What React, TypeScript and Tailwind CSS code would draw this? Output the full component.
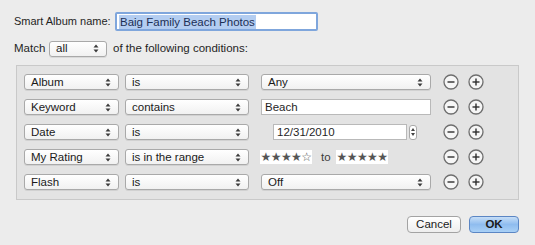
import { ReactNode } from 'react';

const font = { fontFamily: '"Liberation Sans", Arial, sans-serif' };

function Arrows() {
  return (
    <svg width="6" height="9" viewBox="0 0 6 9" className="shrink-0">
      <path d="M3 0.5 L5.5 3.5 H0.5 Z" fill="#3a3a3a" />
      <path d="M3 8.5 L5.5 5.5 H0.5 Z" fill="#3a3a3a" />
    </svg>
  );
}

function Popup({ label, w, className = '' }: { label: string; w: string; className?: string }) {
  return (
    <div
      className={`${w} ${className} h-[16px] flex items-center justify-between pl-[6px] pr-[7px] rounded-[3px] border border-[#a9a9a9] bg-gradient-to-b from-white to-[#f1f1f1] shadow-[0_1px_0_rgba(0,0,0,0.08)] text-[#1a1a1a]`}
    >
      <span className="whitespace-nowrap">{label}</span>
      <Arrows />
    </div>
  );
}

function CircleBtn({ plus }: { plus?: boolean }) {
  return (
    <svg width="16" height="16" viewBox="0 0 16 16">
      <circle cx="8" cy="8" r="7" fill="#f6f6f6" stroke="#6e6e6e" strokeWidth="1.3" />
      <path d="M4.5 8 H11.5" stroke="#2e2e2e" strokeWidth="1.4" />
      {plus && <path d="M8 4.5 V11.5" stroke="#2e2e2e" strokeWidth="1.4" />}
    </svg>
  );
}

function Row({ children }: { children: ReactNode }) {
  return (
    <div className="h-[16px] flex items-center">
      {children}
      <div className="ml-auto mr-[34px] flex items-center gap-[9px]">
        <CircleBtn />
        <CircleBtn plus />
      </div>
    </div>
  );
}

function Stars({ n }: { n: number }) {
  return (
    <div className="w-[52px] h-[14px] bg-white flex items-center justify-center text-[12px] tracking-[-0.6px] text-[#555]" style={{ fontFamily: '"DejaVu Sans", sans-serif' }}>
      {'★★★★★'.slice(0, n)}
      {'☆☆☆☆☆'.slice(0, 5 - n)}
    </div>
  );
}

export default function App() {
  return (
    <div className="w-[535px] h-[245px] bg-[#ececec] text-[11.5px] text-[#1f1f1f] overflow-hidden whitespace-nowrap" style={font}>
      {/* Name */}
      <div className="flex items-center pt-[12px] pl-[14px]">
        <span className="w-[101px] text-[11px]">Smart Album name:</span>
        <div className="w-[203px] h-[19px] rounded-[2px] border-2 border-[#7fa6dc] bg-white flex items-center pl-[2px]">
          <span className="bg-[#b3cdf1] px-[1px] text-[#1c2f55] leading-[14px]">Baig Family Beach Photos</span>
        </div>
      </div>

      {/* Match */}
      <div className="flex items-center pt-[9px] pl-[14px]">
        <span className="w-[35px]">Match</span>
        <Popup label="all" w="w-[58px]" />
        <span className="ml-[6px]">of the following conditions:</span>
      </div>

      {/* Conditions */}
      <div className="ml-[16px] mt-[8px] w-[503px] h-[135px] border border-[#c9c9c9] bg-[#e3e3e3] pt-[8px] pl-[7px] flex flex-col gap-[9px]">
        <Row>
          <Popup label="Album" w="w-[95px]" />
          <Popup label="is" w="w-[124px]" className="ml-[6px]" />
          <Popup label="Any" w="w-[170px]" className="ml-[12px]" />
        </Row>
        <Row>
          <Popup label="Keyword" w="w-[95px]" />
          <Popup label="contains" w="w-[124px]" className="ml-[6px]" />
          <div className="ml-[12px] w-[170px] h-[16px] bg-white border border-[#b9b9b9] pl-[3px] flex items-center">Beach</div>
        </Row>
        <Row>
          <Popup label="Date" w="w-[95px]" />
          <Popup label="is" w="w-[124px]" className="ml-[6px]" />
          <div className="ml-[24px] w-[134px] h-[16px] bg-white border border-[#b9b9b9] pl-[3px] flex items-center">12/31/2010</div>
          <div className="ml-[2px] w-[8px] h-[15px] rounded-[3px] border border-[#a9a9a9] bg-white flex flex-col items-center justify-center gap-[2px]">
            <svg width="4" height="3" viewBox="0 0 4 3"><path d="M2 0 L4 3 H0 Z" fill="#444" /></svg>
            <svg width="4" height="3" viewBox="0 0 4 3"><path d="M2 3 L4 0 H0 Z" fill="#444" /></svg>
          </div>
        </Row>
        <Row>
          <Popup label="My Rating" w="w-[95px]" />
          <Popup label="is in the range" w="w-[124px]" className="ml-[6px]" />
          <div className="ml-[11px]">
            <Stars n={4} />
          </div>
          <span className="ml-[9px] w-[15px] text-[#3a3a3a]">to</span>
          <Stars n={5} />
        </Row>
        <Row>
          <Popup label="Flash" w="w-[95px]" />
          <Popup label="is" w="w-[124px]" className="ml-[6px]" />
          <Popup label="Off" w="w-[170px]" className="ml-[12px]" />
        </Row>
      </div>

      {/* Buttons */}
      <div className="flex justify-end gap-[8px] pr-[16px] mt-[16px]">
        <button className="w-[54px] h-[17px] rounded-[4px] border border-[#a3a3a3] bg-gradient-to-b from-white to-[#eeeeee] flex items-center justify-center text-[#1a1a1a]">
          Cancel
        </button>
        <button className="w-[50px] h-[17px] rounded-[4px] border border-[#5b86c4] bg-gradient-to-b from-[#c7def7] via-[#8fbcef] to-[#a9d0f6] flex items-center justify-center font-bold text-[#1a1a1a]">
          OK
        </button>
      </div>
    </div>
  );
}
